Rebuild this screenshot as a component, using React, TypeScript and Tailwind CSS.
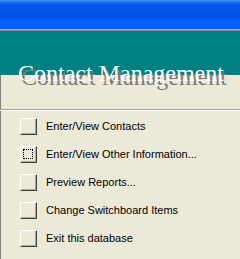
import React from "react";

const items = [
  "Enter/View Contacts",
  "Enter/View Other Information...",
  "Preview Reports...",
  "Change Switchboard Items",
  "Exit this database",
];

function Btn({ focused }: { focused?: boolean }) {
  return (
    <div className="w-[17px] h-[17px] shrink-0 border-t border-l border-t-white border-l-white border-b border-r border-b-[#404040] border-r-[#404040] bg-[#ece9d8]">
      <div className="w-full h-full border-b border-r border-b-[#aca899] border-r-[#aca899] p-[2px]">
        {focused && <div className="w-full h-full border border-dotted border-black" />}
      </div>
    </div>
  );
}

export default function App() {
  return (
    <div className="w-[240px] h-[259px] overflow-hidden flex flex-col bg-[#ece9d8]">
      <div className="h-[29px] shrink-0 bg-[linear-gradient(to_bottom,#3d8ff7_0px,#3d8ff7_1px,#1a6ef2_2px,#0058e8_5px,#0053e2_14px,#0056e6_19px,#0062f8_21px,#0063f8_29px)]" />
      <div className="h-px bg-[#b4b4b4] shrink-0" />
      <div className="h-px bg-[#8c8c8c] shrink-0" />
      <div className="relative shrink-0 flex flex-col">
        <div className="h-[44px] bg-[#008080]" />
        <div className="h-[34px] border-l border-l-[#808080]" />
        <div className="h-px bg-[#a0a0a0]" />
        <div className="h-px bg-white" />
        <span
          className="absolute left-[18px] top-[30px] text-[24px] leading-[24px] text-white whitespace-nowrap [text-shadow:3px_4px_0_#7a7a7a]"
          style={{ fontFamily: '"Liberation Serif", "Times New Roman", serif' }}
        >
          Contact Management
        </span>
      </div>
      <div
        className="flex-1 border-l border-l-[#808080] pt-[7px] pl-[19px] flex flex-col gap-[11px]"
        style={{ fontFamily: '"Liberation Sans", Arial, sans-serif' }}
      >
        {items.map((t, i) => (
          <div key={t} className="h-[17px] flex items-center gap-[9px]">
            <Btn focused={i === 1} />
            <span className="text-[11px] leading-[13px] text-black whitespace-nowrap">{t}</span>
          </div>
        ))}
      </div>
    </div>
  );
}
